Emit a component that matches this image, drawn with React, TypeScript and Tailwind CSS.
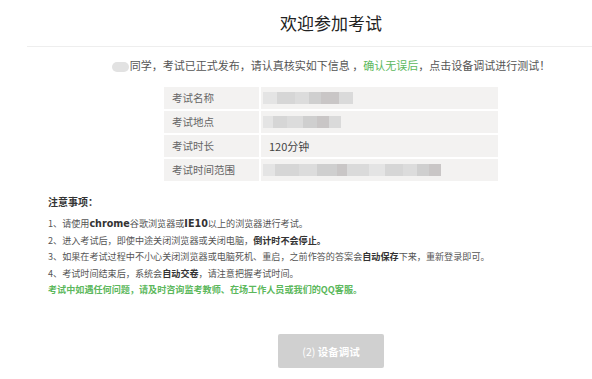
import React from 'react';

const rows = [
  { label: '考试名称', blur: [14, 18, 14, 12, 18, 14] },
  { label: '考试地点', blur: [10, 14, 16, 14, 12, 12] },
  { label: '考试时长', value: '120分钟' },
  { label: '考试时间范围', blur: [12, 24, 18, 20, 10, 22, 16, 18, 14, 12, 12] },
];

const shades = ['bg-[#e4e4e4]', 'bg-[#d6d6d6]', 'bg-[#dcdcdc]', 'bg-[#cfcfcf]', 'bg-[#c9c6c6]', 'bg-[#dadada]'];

const Blur: React.FC<{ widths: number[] }> = ({ widths }) => (
  <div className="flex h-[12px]">
    {widths.map((w, i) => (
      <span key={i} className={shades[i % shades.length]} style={{ width: w }} />
    ))}
  </div>
);

// latin words in the notes are set wider and bold in the original
const Latin: React.FC<{ children: React.ReactNode }> = ({ children }) => (
  <b className="text-[#333] text-[9.6px] leading-none" style={{ fontFamily: '"DejaVu Sans", sans-serif' }}>
    {children}
  </b>
);

const App: React.FC = () => {
  return (
    <div
      className="w-[592px] h-[379px] overflow-hidden bg-white text-[#555]"
      style={{ fontFamily: '"Noto Sans CJK SC", "Noto Sans", sans-serif' }}
    >
      <div className="ml-[27px] w-[608px]">
        {/* Title */}
        <div className="h-[47px] border-b border-[#eeeeee] flex items-center justify-center pb-[2px]">
          <h1 className="text-[17px] text-[#222] leading-none">欢迎参加考试</h1>
        </div>

        {/* Intro */}
        <p className="mt-[11px] text-center text-[11px] leading-[14px] text-[#555]">
          <span className="inline-block align-middle w-[17px] h-[10px] mr-[1px] rounded-full bg-[#e2e2e2]" />
          同学，考试已正式发布，请认真核实如下信息 ，
          <span className="text-[#5cb85c]">确认无误后</span>，点击设备调试进行测试！
        </p>

        {/* Info table */}
        <div className="mx-auto mt-[15px] w-[334px] grid grid-cols-[95px_1fr] gap-[2px] text-[10.5px]">
          {rows.map((r) => (
            <React.Fragment key={r.label}>
              <div className="h-[22px] bg-[#f3f2f1] flex items-center pl-[8px] text-[#666]">{r.label}</div>
              <div className="h-[22px] bg-[#f3f2f1] flex items-center pl-[2px] text-[#444]">
                {r.value ? <span className="pl-[6px] text-[11px]">{r.value}</span> : <Blur widths={r.blur!} />}
              </div>
            </React.Fragment>
          ))}
        </div>

        {/* Notes */}
        <div className="mt-[13px] pl-[21px] text-[9.1px] leading-[16.4px]">
          <div className="font-bold text-[#333] text-[10px] mb-[5px]">注意事项：</div>
          <p>
            1、请使用<Latin>chrome</Latin>谷歌浏览器或<Latin>IE10</Latin>以上的浏览器进行考试。
          </p>
          <p>
            2、进入考试后，即使中途关闭浏览器或关闭电脑，<b className="text-[#333]">倒计时不会停止。</b>
          </p>
          <p>
            3、如果在考试过程中不小心关闭浏览器或电脑死机、重启，之前作答的答案会<b className="text-[#333]">自动保存</b>下来，重新登录即可。
          </p>
          <p>
            4、考试时间结束后，系统会<b className="text-[#333]">自动交卷</b>，请注意把握考试时间。
          </p>
          <p className="font-bold text-[#5cb85c]">考试中如遇任何问题，请及时咨询监考教师、在场工作人员或我们的QQ客服。</p>
        </div>

        {/* Button */}
        <div className="mt-[37px] flex justify-center">
          <button className="w-[106px] h-[34px] rounded-[2px] bg-[#d0d0d0] text-white text-[10.5px] font-bold">
            <span className="font-normal">(2)</span> 设备调试
          </button>
        </div>
      </div>
    </div>
  );
};

export default App;
